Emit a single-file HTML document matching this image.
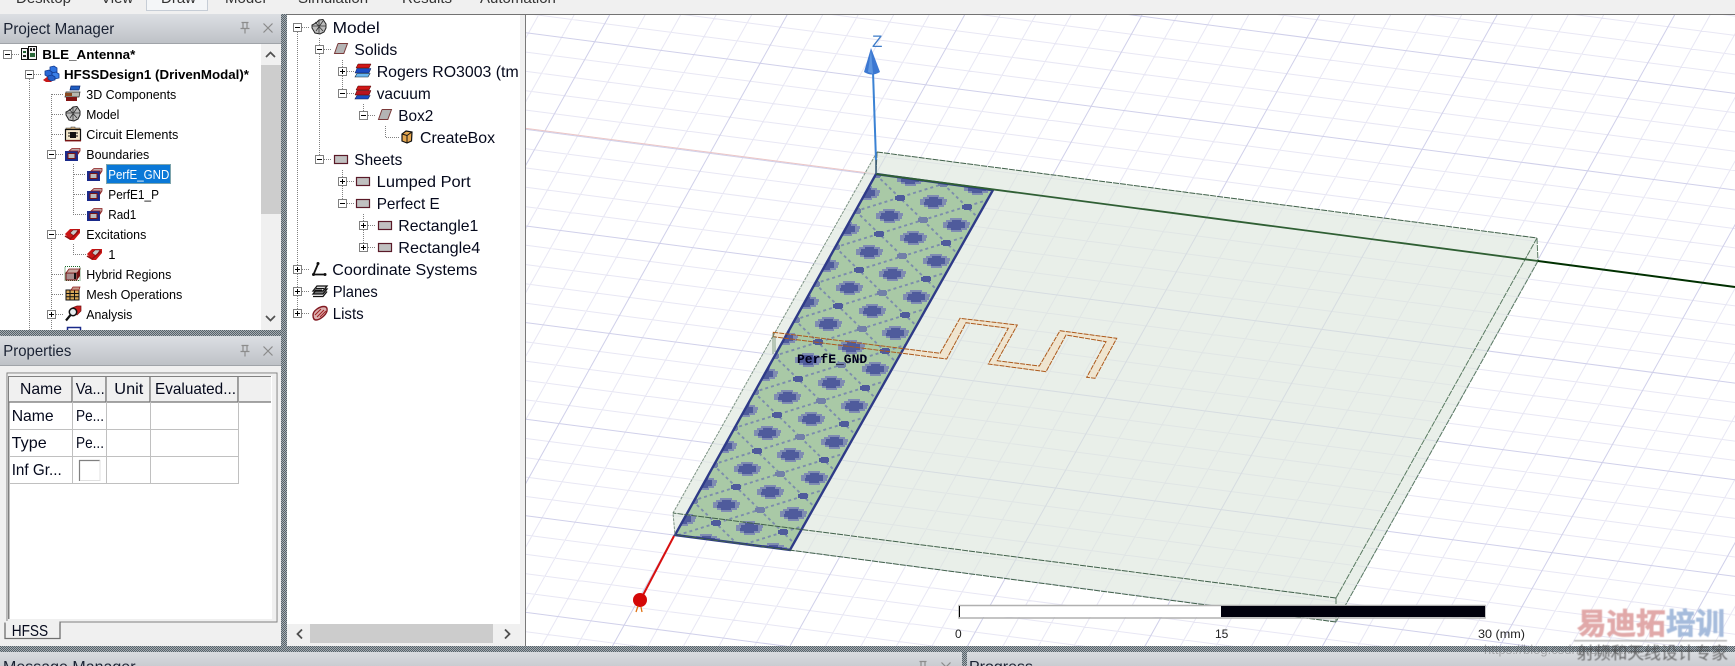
<!DOCTYPE html>
<html><head><meta charset="utf-8"><title>HFSS</title>
<style>
html,body{margin:0;padding:0;background:#f0f0f0;width:1735px;height:666px;overflow:hidden}
svg{position:absolute;left:0;top:0;display:block}
text{font-family:"Liberation Sans","Noto Sans CJK SC",sans-serif}
.t13{font-size:13px;fill:#000}
.t16{font-size:16px;fill:#05091c}
.b{font-weight:bold}
.hd{font-size:16px;fill:#1a2233}
.tab{font-size:15px;fill:#333}
.sc{font-size:12px;fill:#222}
</style></head><body>
<svg width="1735" height="666" viewBox="0 0 1735 666" xmlns="http://www.w3.org/2000/svg">
<defs>
<pattern id="hp" width="2" height="2" patternUnits="userSpaceOnUse"><rect width="2" height="2" fill="#a6adb2"/><rect width="1" height="1" fill="#56626a"/><rect x="1" y="1" width="1" height="1" fill="#56626a"/></pattern>
<linearGradient id="hg" x1="0" y1="0" x2="0" y2="1"><stop offset="0" stop-color="#dcdfe3"/><stop offset="1" stop-color="#bdc1c6"/></linearGradient>
<linearGradient id="hg2" x1="0" y1="0" x2="0" y2="1"><stop offset="0" stop-color="#d9dce0"/><stop offset="1" stop-color="#c9ccd1"/></linearGradient>
<clipPath id="vp"><rect x="526" y="15" width="1209" height="631"/></clipPath>
<clipPath id="strip"><polygon points="876,174 993,190 790,550 675,535"/></clipPath>
<clipPath id="lt"><rect x="0" y="44" width="261" height="286"/></clipPath>
<g id="mi"><rect x=".5" y=".5" width="8" height="8" fill="#fff" stroke="#808080"/><path d="M2 4.5H7" stroke="#000"/></g>
<g id="pl"><rect x=".5" y=".5" width="8" height="8" fill="#fff" stroke="#808080"/><path d="M2 4.5H7M4.5 2V7" stroke="#000"/></g>
<g id="bd"><rect x="0" y="3" width="13" height="10" fill="#1a2a8a"/><rect x="3" y="5.5" width="7" height="5" fill="#bcbcbc" stroke="#7a1414"/><path d="M4 3L7 .5H15V3L13 6V3Z" fill="#c4a8a8" stroke="#8b1a1a" stroke-width=".8"/></g>
<g id="ex"><path d="M0 6L5 1H15V5L9 12H5Z" fill="#cc1515"/><path d="M5 5L8 2H13L9 8Z" fill="#c8c8c8" stroke="#701010" stroke-width=".6"/><path d="M0 8L5 11L14 3" fill="none" stroke="#901010" stroke-width="1.4"/></g>
<g id="pj"><rect x=".5" y="2.5" width="6" height="11" fill="#f4f4f4" stroke="#111"/><rect x="7.5" y=".5" width="8" height="13" fill="#f4f4f4" stroke="#111"/><rect x="2" y="5" width="3" height="2" fill="#1a5a2a"/><rect x="2" y="9" width="3" height="2" fill="#222"/><rect x="9" y="2" width="2" height="3" fill="#222"/><rect x="12" y="2" width="2" height="3" fill="#222"/><rect x="9" y="7" width="5" height="4" fill="#2a6a3a"/></g>
<g id="hf"><path d="M0 14L4 11H14L8 16H3Z" fill="#c81818"/><path d="M7 1L11 0L14 2V6L10 7L7 5Z" fill="#2f74e0" stroke="#123a90" stroke-width=".8"/><path d="M2 5L6 4L9 6V10L5 11L2 9Z" fill="#2a68d4" stroke="#123a90" stroke-width=".8"/><path d="M9 7L13 6L16 8V12L12 13L9 11Z" fill="#3a80e8" stroke="#123a90" stroke-width=".8"/><path d="M5 10L9 9L12 11V14L8 15L5 13Z" fill="#2560c8" stroke="#123a90" stroke-width=".8"/></g>
<g id="c3"><path d="M6 0H15L14 4H5Z" fill="#1e5cc0" stroke="#0e2a70" stroke-width=".7"/><path d="M1 6H15L14 11H0Z" fill="#b8b8b0" stroke="#222" stroke-width=".7"/><rect x="0" y="7" width="7" height="3" fill="#8a4a20"/><rect x="1" y="11" width="11" height="4" fill="#801414"/></g>
<g id="md"><path d="M5 4L8 1L12 .5L15 5V9L13 13L9 15L4 14L1 9V6Z" fill="#bcbcbc" stroke="#222"/><path d="M8 1V15M1 7H15M4 3L12 12M12 2L5 12" stroke="#333" fill="none" stroke-width=".8"/></g>
<g id="ce"><path d="M1 2H6V1H10V2H15V4H1Z" fill="#caa878" stroke="#444" stroke-width=".6"/><rect x=".5" y="3.5" width="15" height="11" fill="#f4e8cc" stroke="#111" stroke-width="1.2"/><rect x="5" y="6" width="6" height="6" fill="#111"/><path d="M3 7H13M3 10H13" stroke="#111"/><rect x="0" y="14" width="16" height="1.4" fill="#7a1414"/></g>
<g id="hy"><rect x="0" y=".5" width="15" height="14" fill="none" stroke="#1a6a2a" stroke-dasharray="1 1"/><path d="M1 7H12V14H1Z" fill="#a89090" stroke="#7a1414"/><path d="M4 3H15L12 7H1Z" fill="#c8a8a0" stroke="#7a1414" stroke-width=".8"/><path d="M12 7L15 3V10L12 14Z" fill="#7a1414"/><rect x="9" y="7" width="2" height="6" fill="#111"/></g>
<g id="ms"><rect x="0" y="3" width="13" height="10" fill="#d8a858" stroke="#111"/><path d="M4 3V13M8.500 3V13M0 6.500H13M0 9.800H13" stroke="#111"/><path d="M5 3L7 0H14L13 3Z" fill="#c89888" stroke="#8b1a1a" stroke-width=".7"/></g>
<g id="an"><path d="M7 2L12 0H16V5L12 9Z" fill="#c82020" stroke="#701010" stroke-width=".7"/><circle cx="8" cy="6" r="3.700" fill="#e8eef0" stroke="#111" stroke-width="1.5"/><path d="M5.500 9L1 14.500" stroke="#111" stroke-width="2.200"/></g>
<g id="so"><path d="M4 .5H13.500L9.800 10.500H.5Z" fill="#b4b4b4"/><path d="M4 .5H13.500L9.800 10.500H.5L4 .5" fill="none" stroke="#7a3a3a" stroke-width="1"/></g>
<g id="mt"><path d="M3 0H16L14 4H1Z" fill="#d01818" stroke="#400" stroke-width=".5"/><path d="M2 4.500H16L14 9H0Z" fill="#1a4cc4" stroke="#0a1a50" stroke-width=".5"/><path d="M2 9.500H15L13 13H0Z" fill="#6ab8f0" stroke="#123" stroke-width=".6"/></g>
<g id="mv"><path d="M3 0H16L14 4H1Z" fill="#d01818" stroke="#400" stroke-width=".5"/><path d="M2 4.500H16L14 9H0Z" fill="#b81420" stroke="#400" stroke-width=".5"/><path d="M2 9.500H15L13 13H0Z" fill="#1a4cc4" stroke="#0a1a50" stroke-width=".6"/></g>
<g id="sh"><rect x=".5" y=".5" width="13" height="8" fill="#c0c0c0" stroke="#5a1a28" stroke-width="1.200"/></g>
<g id="cb"><path d="M4 0L10 1L9.500 10L5 12L0 10V3Z" fill="#e6a850" stroke="#111" stroke-width="1.200"/><path d="M0 3L5 4.500L10 1M5 4.500V12" fill="none" stroke="#111"/></g>
<g id="co"><path d="M1.500 12.500H13M1.500 12.500L6 2" fill="none" stroke="#111" stroke-width="1.800"/><circle cx="6" cy="1.500" r="1.500" fill="#111"/><circle cx="13" cy="12.500" r="1.500" fill="#111"/><circle cx="1.500" cy="12.500" r="1.500" fill="#111"/></g>
<g id="pn"><path d="M1 9L5 4H15L11 9Z" fill="#777" stroke="#111" stroke-width="1.300"/><path d="M1 6L5 1H15L11 6Z" fill="#ddd" stroke="#111" stroke-width="1.300"/><path d="M1 11.500H11L15 6.500" fill="none" stroke="#111" stroke-width="1.300"/><path d="M4 3.500H12M3 5H10" stroke="#111"/></g>
<g id="ls"><path d="M1 9C1 5 7 .5 12 .5C15 .5 15.500 3 15 5C14 9 8 14 4 14C2 14 1 12 1 9Z" fill="#dcb0b0" stroke="#801820" stroke-width="1.400"/><path d="M3 9L9 3M5 11L12 4M8 11L14 5" stroke="#a02020"/></g>
<g id="pin"><path d="M-3.500 -5.500H3.500M-2 -5.500V0.500M2 -5.500V0.500M-4.500 .5H4.500M0 .5V5.500" fill="none" stroke="#8c8c8c" stroke-width="1.200"/></g>
<g id="xx"><path d="M-4.500 -4.500L4.500 4.500M4.500 -4.500L-4.500 4.500" stroke="#8a8a8a" stroke-width="1.200"/></g>
</defs>

<rect width="1735" height="666" fill="#f0f0f0"/>
<!-- top tabs -->
<rect x="146.500" y="-2" width="61" height="12.500" fill="#f4f6f8" stroke="#c6cdd6"/>
<text class="tab" x="16" y="3">Desktop</text>
<text class="tab" x="101" y="3">View</text>
<text class="tab" x="161" y="3">Draw</text>
<text class="tab" x="225" y="3">Model</text>
<text class="tab" x="298" y="3">Simulation</text>
<text class="tab" x="402" y="3">Results</text>
<text class="tab" x="480" y="3">Automation</text>
<rect x="287" y="14" width="1448" height="1.500" fill="#737373"/>

<!-- viewport -->
<rect x="526" y="15" width="1209" height="631" fill="#fff"/>
<rect x="525" y="15" width="1" height="631" fill="#7a7a7a"/>
<g clip-path="url(#vp)">
<path id="gf" fill="none" stroke="#e8e7f4" stroke-width="1"/>
<path id="gd" fill="none" stroke="#d0d0ea" stroke-width="1"/>
<path d="M526 128.400L876 174" stroke="#ecc6c6" stroke-width="1"/>
<!-- box -->
<polygon points="877,152 1537,238 1538,261 1336,622 675,535 673,513" fill="#dae4da" fill-opacity=".6"/>
<!-- antenna fill -->
<path d="M773.300 332.300L940 353.300L960 318.300L1017.300 325L997.300 360.700L1039.300 366L1060 330.700L1116.700 338.300L1095 378.300L1086.700 377.300L1106 341.700L1066 335L1046 371.700L988.300 364L1008.300 328.300L966 322.700L946.700 359L773.300 336.700Z" fill="#efe5d0"/>
<!-- strip -->
<polygon points="876,174 993,190 790,550 675,535" fill="#a9c9a6"/>
<g clip-path="url(#strip)">
<path id="dl" fill="none" stroke="#7c8dac" stroke-width="1.900" stroke-dasharray="3 3"/>
<path id="halo" fill="#7f8cb2" shape-rendering="crispEdges"/>
<path id="core" fill="#4f5b9c" shape-rendering="crispEdges"/>
<path id="lk" fill="#7280a8" shape-rendering="crispEdges"/>
</g>
<polygon points="876,174 993,190 790,550 675,535" fill="none" stroke="#2e3a88" stroke-width="2.400"/>
<!-- box edges -->
<path d="M877 152L673 513L675 535" fill="none" stroke="#7c9284" stroke-width="1" stroke-dasharray="3 1"/>
<path d="M1537 238L1336 598M1538 261L1336 622M1537 238L1538 261M1336 598V622" fill="none" stroke="#5a7a62" stroke-width="1" stroke-dasharray="6 1"/>
<path d="M877 152L1537 238M1336 598L673 513M1336 622L675 535M877 152L876 174" fill="none" stroke="#40604a" stroke-width="1" stroke-dasharray="6 1"/>
<!-- antenna outline -->
<path d="M773.300 332.300L940 353.300L960 318.300L1017.300 325L997.300 360.700L1039.300 366L1060 330.700L1116.700 338.300L1095 378.300L1086.700 377.300L1106 341.700L1066 335L1046 371.700L988.300 364L1008.300 328.300L966 322.700L946.700 359L773.300 336.700Z" fill="none" stroke="#ad5a1c" stroke-width="1" stroke-dasharray="5 1"/>
<path d="M773 333V354M775 336V352" stroke="#5a7a5a" stroke-opacity=".7" stroke-width="1"/>
<!-- axes -->
<path d="M876 174L1538 261" stroke="#2f5f33" stroke-width="1.800"/>
<path d="M1538 261L1735 287" stroke="#003000" stroke-width="2"/>
<path d="M873 72L876 160" stroke="#3b82d4" stroke-width="2"/>
<path d="M876 160L876 174" stroke="#40607a" stroke-width="1.600"/>
<path d="M871 48L864 72Q872 77 880 72Z" fill="#3c78d2"/>
<path d="M871 50L868 72L873 74Z" fill="#5e96e0"/>
<path d="M674 536L642 597" stroke="#d81010" stroke-width="2"/>
<circle cx="640" cy="600" r="7" fill="#d40808"/>
<path d="M638 606L636 612M641 607L642 612" stroke="#e07010" stroke-width="1.300"/>
<!-- scale -->
<rect x="959" y="606" width="262" height="11" fill="#fff"/>
<rect x="959" y="605.500" width="526" height="12.500" fill="none" stroke="#b0b0b0" stroke-width="1.500"/>
<rect x="959" y="606" width="1" height="11" fill="#000"/>
<rect x="1221" y="606" width="264" height="11" fill="#00000c"/>
<text class="sc" x="955" y="638">0</text>
<text class="sc" x="1215" y="638">15</text>
<text class="sc" x="1478" y="638" textLength="47" lengthAdjust="spacingAndGlyphs">30 (mm)</text>
<text x="872" y="47" style="font-size:17px;fill:#3e7cc8">Z</text>
<text x="797" y="363" style="font-family:'Liberation Mono',monospace;font-size:13px;font-weight:bold;fill:#00001a">PerfE_GND</text>
</g>

<!-- mid panel -->
<rect x="287" y="15" width="233" height="631" fill="#fff"/>
<path d="M297.500 32V309M319.500 38V155M342.500 60V89M342.500 170V199M363.500 104V111M363.500 214V243M385.500 126V137.500H399M302 27.500H310M324 49.500H332M347 71.500H354M347 93.500H354M368 115.500H376M324 159.500H332M347 181.500H354M347 203.500H354M368 225.500H376M368 247.500H376M302 269.500H310M302 291.500H310M302 313.500H310" fill="none" stroke="#808080" stroke-dasharray="1 1" shape-rendering="crispEdges"/>
<use href="#mi" x="293" y="23"/><use href="#mi" x="315" y="45"/><use href="#pl" x="338" y="67"/><use href="#mi" x="338" y="89"/><use href="#mi" x="359" y="111"/><use href="#mi" x="315" y="155"/><use href="#pl" x="338" y="177"/><use href="#mi" x="338" y="199"/><use href="#pl" x="359" y="221"/><use href="#pl" x="359" y="243"/><use href="#pl" x="293" y="265"/><use href="#pl" x="293" y="287"/><use href="#pl" x="293" y="309"/>
<use href="#md" x="311" y="19"/><use href="#so" x="334" y="43"/><use href="#mt" x="355" y="64"/><use href="#mv" x="355" y="86"/><use href="#so" x="378" y="109"/><use href="#cb" x="402" y="131"/><use href="#sh" x="334" y="155"/><use href="#sh" x="356" y="177"/><use href="#sh" x="356" y="199"/><use href="#sh" x="378" y="221"/><use href="#sh" x="378" y="243"/><use href="#co" x="312" y="262"/><use href="#pn" x="312" y="285"/><use href="#ls" x="312" y="306"/>
<text class="t16" x="332.700" y="33" textLength="47" lengthAdjust="spacingAndGlyphs">Model</text>
<text class="t16" x="354.300" y="55" textLength="43" lengthAdjust="spacingAndGlyphs">Solids</text>
<text class="t16" x="376.700" y="77" textLength="142" lengthAdjust="spacingAndGlyphs">Rogers RO3003 (tm</text>
<text class="t16" x="376.700" y="99" textLength="54" lengthAdjust="spacingAndGlyphs">vacuum</text>
<text class="t16" x="398.300" y="121" textLength="35" lengthAdjust="spacingAndGlyphs">Box2</text>
<text class="t16" x="420" y="143" textLength="75" lengthAdjust="spacingAndGlyphs">CreateBox</text>
<text class="t16" x="354.300" y="165" textLength="48" lengthAdjust="spacingAndGlyphs">Sheets</text>
<text class="t16" x="376.700" y="187" textLength="94" lengthAdjust="spacingAndGlyphs">Lumped Port</text>
<text class="t16" x="376.700" y="209" textLength="63" lengthAdjust="spacingAndGlyphs">Perfect E</text>
<text class="t16" x="398.300" y="231" textLength="80" lengthAdjust="spacingAndGlyphs">Rectangle1</text>
<text class="t16" x="398.300" y="253" textLength="82" lengthAdjust="spacingAndGlyphs">Rectangle4</text>
<text class="t16" x="332.300" y="275" textLength="145" lengthAdjust="spacingAndGlyphs">Coordinate Systems</text>
<text class="t16" x="332.700" y="297" textLength="45" lengthAdjust="spacingAndGlyphs">Planes</text>
<text class="t16" x="332.700" y="319" textLength="31" lengthAdjust="spacingAndGlyphs">Lists</text>
<rect x="520" y="15" width="5" height="631" fill="#f0f0f0"/>
<rect x="287" y="624" width="233" height="22" fill="#f0f0f0"/>
<rect x="310" y="624" width="183" height="19" fill="#cccccc"/>
<path d="M302 629.500L297.500 634L302 638.500M505 629.500L509.500 634L505 638.500" fill="none" stroke="#505050" stroke-width="1.800"/>

<!-- project manager -->
<rect x="0" y="14" width="281" height="30" fill="url(#hg)"/>
<rect x="0" y="43" width="281" height="1" fill="#a0a4a9"/>
<text class="hd" x="3.300" y="34" textLength="111" lengthAdjust="spacingAndGlyphs">Project Manager</text>
<use href="#pin" x="245" y="28"/><use href="#xx" x="268" y="28"/>
<rect x="0" y="44" width="261" height="286" fill="#fff"/>
<rect x="261" y="44" width="20" height="286" fill="#f0f0f0"/>
<rect x="261" y="65" width="20" height="149" fill="#cdcdcd"/>
<path d="M266 57L270.500 52.500L275 57M266 316L270.500 320.500L275 316" fill="none" stroke="#505050" stroke-width="1.700"/>
<g clip-path="url(#lt)">
<path d="M29.500 79V330M51.500 94V330M73.500 164V214.500H86M73.500 244V254.500H86M12 54.500H20M34 74.500H42M52 94.500H64M52 114.500H64M52 134.500H64M56 154.500H64M74 174.500H86M74 194.500H86M56 234.500H64M52 274.500H64M52 294.500H64M56 314.500H64" fill="none" stroke="#808080" stroke-dasharray="1 1" shape-rendering="crispEdges"/>
<use href="#mi" x="3" y="50"/><use href="#mi" x="25" y="70"/><use href="#mi" x="47" y="150"/><use href="#mi" x="47" y="230"/><use href="#pl" x="47" y="310"/>
<use href="#pj" x="21" y="46"/><use href="#hf" x="43" y="66"/><use href="#c3" x="65" y="86"/><use href="#md" x="65" y="106"/><use href="#ce" x="65" y="126"/><use href="#bd" x="65" y="148"/><use href="#bd" x="87" y="168"/><use href="#bd" x="87" y="188"/><use href="#bd" x="87" y="208"/><use href="#ex" x="65" y="228"/><use href="#ex" x="87" y="248"/><use href="#hy" x="65" y="266"/><use href="#ms" x="66" y="287"/><use href="#an" x="65" y="306"/>
<rect x="67.500" y="327.500" width="13" height="8" fill="#fff" stroke="#1a2a8a" stroke-width="1.500"/>
</g>
<text class="t13 b" x="42.300" y="59" textLength="93" lengthAdjust="spacingAndGlyphs">BLE_Antenna*</text>
<text class="t13 b" x="64" y="79" textLength="185" lengthAdjust="spacingAndGlyphs">HFSSDesign1 (DrivenModal)*</text>
<text class="t13" x="86.300" y="99" textLength="90" lengthAdjust="spacingAndGlyphs">3D Components</text>
<text class="t13" x="86.300" y="119" textLength="33" lengthAdjust="spacingAndGlyphs">Model</text>
<text class="t13" x="86.300" y="139" textLength="92" lengthAdjust="spacingAndGlyphs">Circuit Elements</text>
<text class="t13" x="86.300" y="159" textLength="63" lengthAdjust="spacingAndGlyphs">Boundaries</text>
<rect x="106" y="164" width="65" height="20" fill="#0a78d7"/>
<rect x="106.500" y="164.500" width="64" height="19" fill="none" stroke="#f0d080" stroke-dasharray="1 1"/>
<text class="t13" x="108.300" y="179" textLength="61" lengthAdjust="spacingAndGlyphs" style="fill:#fff">PerfE_GND</text>
<text class="t13" x="108.300" y="199" textLength="50.700" lengthAdjust="spacingAndGlyphs">PerfE1_P</text>
<text class="t13" x="108.300" y="219" textLength="28" lengthAdjust="spacingAndGlyphs">Rad1</text>
<text class="t13" x="86.300" y="239" textLength="60" lengthAdjust="spacingAndGlyphs">Excitations</text>
<text class="t13" x="108.300" y="259">1</text>
<text class="t13" x="86.300" y="279" textLength="85" lengthAdjust="spacingAndGlyphs">Hybrid Regions</text>
<text class="t13" x="86.300" y="299" textLength="96" lengthAdjust="spacingAndGlyphs">Mesh Operations</text>
<text class="t13" x="86.300" y="319" textLength="46" lengthAdjust="spacingAndGlyphs">Analysis</text>

<!-- properties -->
<rect x="0" y="336" width="281" height="30" fill="url(#hg)"/>
<rect x="0" y="365" width="281" height="1" fill="#a0a4a9"/>
<text class="hd" x="3.300" y="356" textLength="68" lengthAdjust="spacingAndGlyphs">Properties</text>
<use href="#pin" x="245" y="351"/><use href="#xx" x="268" y="351"/>
<rect x="0" y="366" width="281" height="280" fill="#f0f0f0"/>
<rect x="7" y="373" width="270" height="249" fill="#fff" stroke="#808080"/>
<rect x="272" y="374" width="4" height="247" fill="#f0f0f0"/>
<rect x="8" y="619" width="268" height="2.500" fill="#f0f0f0"/>
<rect x="8" y="621.500" width="268" height="1" fill="#808080"/>
<rect x="8" y="374" width="264" height="2" fill="#f0f0f0"/>
<rect x="8" y="376" width="1.500" height="243" fill="#808080"/>
<g fill="#f0f0f0">
<rect x="9" y="376" width="63" height="26"/><rect x="73" y="376" width="33" height="26"/><rect x="107" y="376" width="43" height="26"/><rect x="151" y="376" width="87" height="26"/><rect x="239" y="376" width="32" height="26"/>
</g>
<path d="M72 376V402.500M106 376V402.500M150 376V402.500M238 376V402.500M9 402H72M73 402H106M107 402H150M151 402H238M239 402H271" stroke="#707070" stroke-width="1.300" fill="none"/>
<path d="M9 376.500H271" stroke="#808080"/>
<path d="M72.500 402V483M106.500 402V483M150.500 402V483M238.500 402V483M9 429.500H239M9 456.500H239M9 483.500H239" stroke="#c0c0c0" fill="none"/>
<text class="t16" x="20" y="394" textLength="42" lengthAdjust="spacingAndGlyphs">Name</text>
<text class="t16" x="75.700" y="394" textLength="29" lengthAdjust="spacingAndGlyphs">Va...</text>
<text class="t16" x="114.300" y="394" textLength="29" lengthAdjust="spacingAndGlyphs">Unit</text>
<text class="t16" x="155" y="394" textLength="81" lengthAdjust="spacingAndGlyphs">Evaluated...</text>
<text class="t16" x="11.700" y="421" textLength="42" lengthAdjust="spacingAndGlyphs">Name</text>
<text class="t16" x="76" y="421" textLength="28" lengthAdjust="spacingAndGlyphs">Pe...</text>
<text class="t16" x="11.700" y="448" textLength="35" lengthAdjust="spacingAndGlyphs">Type</text>
<text class="t16" x="76" y="448" textLength="28" lengthAdjust="spacingAndGlyphs">Pe...</text>
<text class="t16" x="11.700" y="475" textLength="50" lengthAdjust="spacingAndGlyphs">Inf Gr...</text>
<rect x="79" y="460" width="21" height="21" fill="#fff"/>
<path d="M79.500 481V460.500H100" fill="none" stroke="#808080" stroke-width="1.200"/>
<path d="M80 480.500H100V460" fill="none" stroke="#e0e0e0"/>
<path d="M5 622.500V638.500H60V622" fill="#f0f0f0" stroke="#707070" stroke-width="1.300"/>
<rect x="5.700" y="621" width="53.600" height="2.500" fill="#f0f0f0"/>
<text class="t16" x="11.700" y="636" textLength="36.500" lengthAdjust="spacingAndGlyphs">HFSS</text>

<!-- splitters -->
<rect x="0" y="330" width="281" height="6" fill="url(#hp)"/>
<rect x="281" y="14" width="6" height="638" fill="url(#hp)"/>
<rect x="0" y="646" width="1735" height="6" fill="url(#hp)"/>
<!-- bottom -->
<rect x="0" y="652" width="1735" height="14" fill="url(#hg2)"/>
<rect x="962" y="646" width="5" height="20" fill="url(#hp)"/>
<text class="hd" x="3" y="672">Message Manager</text>
<text class="hd" x="969" y="672">Progress</text>
<use href="#pin" x="923" y="667"/><use href="#xx" x="946" y="667"/>

<!-- watermark -->
<text x="1484" y="654" style="font-size:13px;fill:#555;fill-opacity:.4">https://blog.csdn.net/weixin_</text>
<g style="filter:blur(.5px)">
<text x="1577" y="634" style="font-size:29.500px;font-weight:bold;fill:#e1a9a9;stroke:#e1a9a9;stroke-width:.7px">易迪拓</text>
<text x="1666" y="634" style="font-size:29.500px;font-weight:bold;fill:#a6bcdc;stroke:#a6bcdc;stroke-width:.7px">培训</text>
<rect x="1574" y="640" width="153" height="1.500" fill="#b0b0b0"/>
<text x="1577" y="659" style="font-size:16.800px;fill:#444;fill-opacity:.75">射频和天线设计专家</text>
</g>
</svg>
<script>
(function(){
var f='',d='',k,a=.13,s=19.32;
for(k=-40;k<=90;k++){var y0=146.8+a*(526-660)+s*k,y1=146.8+a*(1735-660)+s*k,seg='M526 '+y0.toFixed(1)+'L1735 '+y1.toFixed(1);if(((k%5)+5)%5==0)d+=seg;else f+=seg;}
for(k=-20;k<=40;k++){var x0=964+35.5*k-.558*(15-16),x1=964+35.5*k-.558*(646-16),seg2='M'+x0.toFixed(1)+' 15L'+x1.toFixed(1)+' 646';if(((k%5)+5)%5==0)d+=seg2;else f+=seg2;}
document.getElementById('gf').setAttribute('d',f);
document.getElementById('gd').setAttribute('d',d);
function R(x,y,w,h){return 'M'+x+' '+y+'h'+w+'v'+h+'h'+(-w)+'z';}
function B(cx,cy,rows){var o='';cx=Math.round(cx);cy=Math.round(cy);rows.forEach(function(r){o+=R(cx+r[0],cy+r[1],r[2],r[3]);});return o;}
var H=[[-6,-7,12,2],[-10,-5,21,2],[-13,-3,27,3],[-13,0,26,3],[-9,3,20,2],[-5,5,11,2]];
var C=[[-4,-5,9,2],[-8,-3,17,3],[-9,0,18,3],[-5,3,10,2]];
var K=[[-3,-3,7,1],[-5,-2,10,4],[-3,2,7,1]];
var Px=933,Py=202,Ux=-20.4,Uy=36.2,Vx=67,Vy=9;
var hal='',cor='',lig='',lin='',i,j;
for(i=-6;i<=14;i++)for(j=-6;j<=8;j++){
 var px=Px+i*Ux+j*Vx,py=Py+i*Uy+j*Vy;
 if(px<620||px>1040||py<140||py>590)continue;
 var qx=px+(Ux-Vx)/2,qy=py+(Uy-Vy)/2;
 var dx=px-Vx/2,dy=py-Vy/2;
 var lx=px+Ux/2,ly=py+Uy/2;
 lin+='M'+(dx-(Ux+Vx)/2).toFixed(1)+' '+(dy-(Uy+Vy)/2).toFixed(1)+'L'+(dx+(Ux+Vx)/2).toFixed(1)+' '+(dy+(Uy+Vy)/2).toFixed(1);
 lin+='M'+(dx-(Vx-Ux)/2).toFixed(1)+' '+(dy-(Vy-Uy)/2).toFixed(1)+'L'+(dx+(Vx-Ux)/2).toFixed(1)+' '+(dy+(Vy-Uy)/2).toFixed(1);
 hal+=B(px,py,H)+B(qx,qy,H);
 cor+=B(px,py,C)+B(qx,qy,C)+B(dx,dy,K);
 lig+=B(lx,ly,K);
}
document.getElementById('dl').setAttribute('d',lin);
document.getElementById('halo').setAttribute('d',hal);
document.getElementById('core').setAttribute('d',cor);
document.getElementById('lk').setAttribute('d',lig);
})();
</script>
</body></html>
